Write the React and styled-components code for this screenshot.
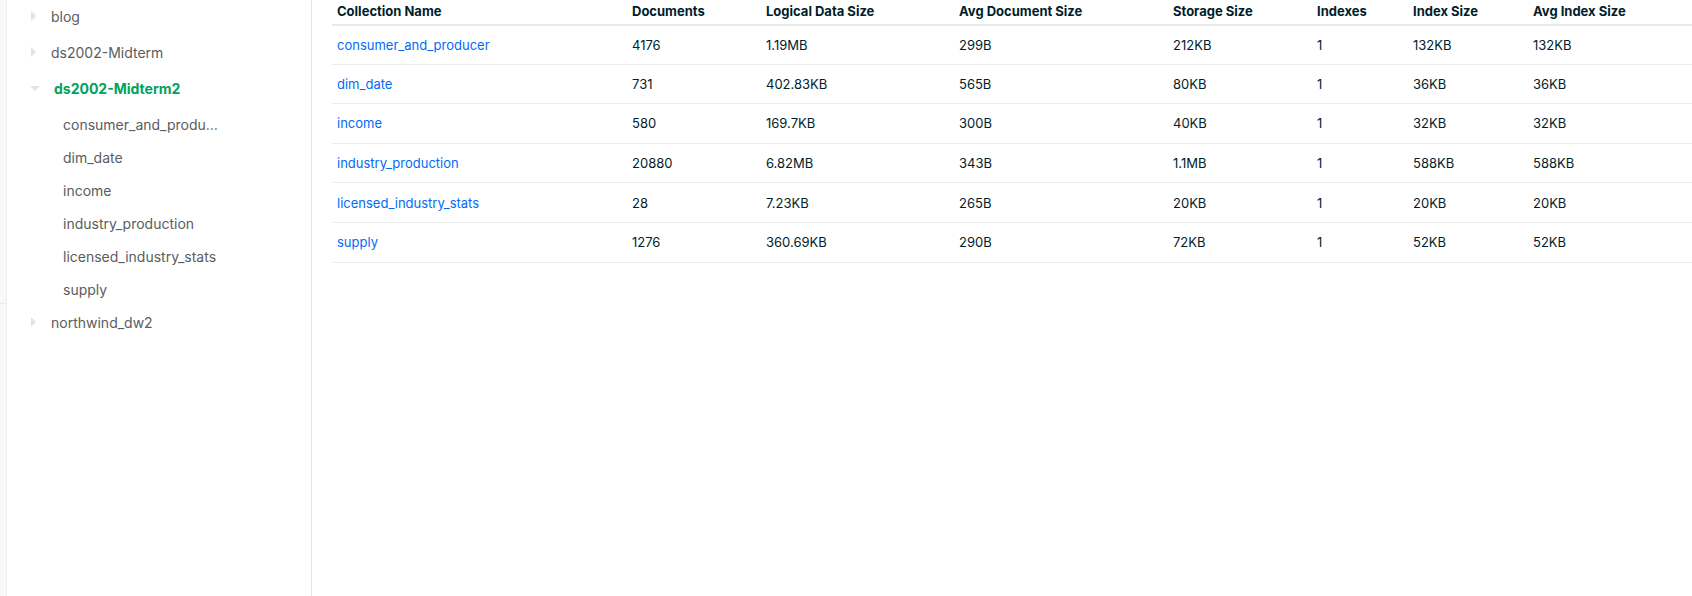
import React from "react";
import styled, { createGlobalStyle } from "styled-components";

const GlobalStyle = createGlobalStyle`
  html, body {
    margin: 0;
    padding: 0;
    background: #ffffff;
    font-family: Inter, "Noto Sans", "Liberation Sans", sans-serif;
  }
`;

const Page = styled.div`
  display: flex;
  width: 1692px;
  height: 596px;
  overflow: hidden;
`;

const Rail = styled.div`
  width: 7px;
  display: flex;
  flex-direction: column;
  background: #f8f9f9;
  border-right: 1px solid #eef0f0;
  box-sizing: border-box;
`;

const RailTop = styled.div`
  height: 303px;
  border-bottom: 1px solid #e8eaea;
`;

const Sidebar = styled.aside`
  width: 305px;
  flex-shrink: 0;
  border-right: 1px solid #e3e5e6;
  box-sizing: border-box;
  margin-top: -2px;
`;

const DbRow = styled.div`
  height: ${(p) => p.$h || 36}px;
  display: flex;
  align-items: center;
  padding-left: ${(p) => (p.$open ? 23 : 24)}px;
  gap: ${(p) => (p.$open ? 14 : 15)}px;
  font-size: 14px;
  color: ${(p) => (p.$open ? "#00a35c" : "#5a5d5f")};
  font-weight: ${(p) => (p.$open ? 700 : 400)};
`;

const Caret = styled.span`
  width: 0;
  height: 0;
  border-style: solid;
  border-color: transparent;
  ${(p) =>
    p.$open
      ? `border-width: 5px 5.5px 0 5.5px; border-top-color: #e2e3e4;`
      : `border-width: 5px 0 5px 5px; border-left-color: #e2e3e4;`}
`;

const Children = styled.div`
  padding-top: 2px;
`;

const ChildRow = styled.div`
  height: 33px;
  display: flex;
  align-items: center;
  padding-left: 56px;
  padding-right: 93px;
  font-size: 14px;
  color: #5a5d5f;
  & > span {
    white-space: nowrap;
    overflow: hidden;
    text-overflow: ellipsis;
  }
`;

const Main = styled.main`
  flex: 1;
  padding-left: 20px;
  min-width: 0;
`;

const Table = styled.table`
  width: 100%;
  border-collapse: collapse;
  table-layout: fixed;
`;

const HeadCell = styled.th`
  height: 24.5px;
  padding: 0 0 2px 5px;
  box-sizing: border-box;
  text-align: left;
  vertical-align: middle;
  font-size: 13px;
  font-weight: 700;
  color: #001e2b;
  border-bottom: 2px solid #e6ebea;
  white-space: nowrap;
  line-height: 14px;
`;

const Row = styled.tr`
  height: 39.6px;
  border-bottom: 1px solid #e8edeb;
`;

const Cell = styled.td`
  padding: 0 0 0 5px;
  font-size: 13px;
  color: ${(p) => (p.$link ? "#016bf8" : "#001e2b")};
  white-space: nowrap;
  vertical-align: middle;
`;

const columns = [
  ["Collection Name", 295],
  ["Documents", 134],
  ["Logical Data Size", 193],
  ["Avg Document Size", 214],
  ["Storage Size", 144],
  ["Indexes", 96],
  ["Index Size", 120],
  ["Avg Index Size", null],
];

const rows = [
  ["consumer_and_producer", "4176", "1.19MB", "299B", "212KB", "1", "132KB", "132KB"],
  ["dim_date", "731", "402.83KB", "565B", "80KB", "1", "36KB", "36KB"],
  ["income", "580", "169.7KB", "300B", "40KB", "1", "32KB", "32KB"],
  ["industry_production", "20880", "6.82MB", "343B", "1.1MB", "1", "588KB", "588KB"],
  ["licensed_industry_stats", "28", "7.23KB", "265B", "20KB", "1", "20KB", "20KB"],
  ["supply", "1276", "360.69KB", "290B", "72KB", "1", "52KB", "52KB"],
];

export default function App() {
  return (
    <>
      <GlobalStyle />
      <Page>
        <Rail>
          <RailTop />
        </Rail>
        <Sidebar>
          <DbRow>
            <Caret />
            blog
          </DbRow>
          <DbRow>
            <Caret />
            ds2002-Midterm
          </DbRow>
          <DbRow $open>
            <Caret $open />
            ds2002-Midterm2
          </DbRow>
          <Children>
            {rows.map((r) => (
              <ChildRow key={r[0]}>
                <span>{r[0]}</span>
              </ChildRow>
            ))}
          </Children>
          <DbRow $h={32}>
            <Caret />
            northwind_dw2
          </DbRow>
        </Sidebar>
        <Main>
          <Table>
            <colgroup>
              {columns.map(([name, w]) => (
                <col key={name} style={w ? { width: w } : undefined} />
              ))}
            </colgroup>
            <thead>
              <tr>
                {columns.map(([name]) => (
                  <HeadCell key={name}>{name}</HeadCell>
                ))}
              </tr>
            </thead>
            <tbody>
              {rows.map((r) => (
                <Row key={r[0]}>
                  {r.map((v, i) => (
                    <Cell key={i} $link={i === 0}>
                      {v}
                    </Cell>
                  ))}
                </Row>
              ))}
            </tbody>
          </Table>
        </Main>
      </Page>
    </>
  );
}
